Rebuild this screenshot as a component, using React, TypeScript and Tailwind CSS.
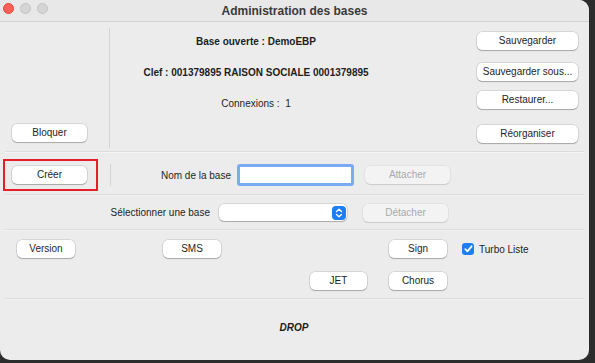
function Btn({
  children,
  className = "",
  disabled = false,
}: {
  children: React.ReactNode;
  className?: string;
  disabled?: boolean;
}) {
  return (
    <button
      className={
        "h-[18px] rounded-[5px] text-[10px] leading-none flex items-center justify-center " +
        (disabled
          ? "bg-[#f3f3f3] text-[#a9a9a9] shadow-[0_0_0_0.5px_rgba(0,0,0,0.08),0_1px_1px_rgba(0,0,0,0.1)] "
          : "bg-white text-[#1e1e1e] shadow-[0_0_0_0.5px_rgba(0,0,0,0.18),0_1px_1px_rgba(0,0,0,0.22)] ") +
        className
      }
    >
      {children}
    </button>
  );
}

function Sep() {
  return <div className="mx-[5px] h-[2px] bg-[#dcdcdc] border-b border-[#f4f4f4]" />;
}

export default function App() {
  return (
    <div
      className="w-[595px] h-[363px] bg-[#2c2c2c] overflow-hidden"
      style={{ fontFamily: '"Liberation Sans", Arial, sans-serif' }}
    >
      <div className="w-[589px] h-[360px] bg-[#ececec] rounded-tr-[10px] rounded-b-[10px] flex flex-col text-[#1e1e1e]">
        {/* Title bar */}
        <div className="h-[22px] relative flex items-center justify-center bg-[#e8e8e8] border-b border-[#d2d2d2] rounded-tr-[10px]">
          <div className="absolute left-[3px] top-[3px] flex gap-[6px]">
            <span className="w-[11px] h-[11px] rounded-full bg-[#fe5f57] border border-[#e2463f]" />
            <span className="w-[11px] h-[11px] rounded-full bg-[#d5d5d5] border border-[#c2c2c2]" />
            <span className="w-[11px] h-[11px] rounded-full bg-[#d5d5d5] border border-[#c2c2c2]" />
          </div>
          <span className="text-[12px] font-bold text-[#3a3a3a]">Administration des bases</span>
        </div>

        {/* Base info */}
        <div className="h-[129px] flex pt-[6px] pb-[3px]">
          <div className="w-[110px] border-r border-[#d4d4d4] flex flex-col justify-end pl-[12px] pb-[6px]">
            <Btn className="w-[75px]">Bloquer</Btn>
          </div>
          <div className="w-[292px] flex flex-col items-center text-[10px]">
            <div className="h-[14px] mt-[6px] font-bold">Base ouverte : DemoEBP</div>
            <div className="h-[14px] mt-[17px] font-bold">Clef : 001379895 RAISON SOCIALE 0001379895</div>
            <div className="h-[14px] mt-[17px]">Connexions :&nbsp; 1</div>
          </div>
          <div className="ml-auto w-[112px] flex flex-col pt-[4px]">
            <Btn className="w-[101px]">Sauvegarder</Btn>
            <Btn className="w-[101px] mt-[13px]">Sauvegarder sous...</Btn>
            <Btn className="w-[101px] mt-[10px]">Restaurer...</Btn>
            <Btn className="w-[101px] mt-[16px]">Réorganiser</Btn>
          </div>
        </div>
        <Sep />

        {/* Nom de la base */}
        <div className="h-[41px] flex items-center pt-[3px]">
          <div className="w-[95px] ml-[3px] h-[32px] border-2 border-[#e3202a] flex items-center pl-[7px]">
            <Btn className="w-[75px]">Créer</Btn>
          </div>
          <div className="w-[1px] h-[22px] bg-[#d4d4d4] ml-[12px]" />
          <span className="text-[10px] w-[120px] text-right">Nom de la base</span>
          <div className="ml-[6px] w-[117px] h-[22px] rounded-[3px] border-[3px] border-[#7aaaf2] bg-white" />
          <Btn disabled className="ml-[11px] w-[85px]">Attacher</Btn>
        </div>
        <Sep />

        {/* Sélectionner */}
        <div className="h-[33px] flex items-center">
          <span className="text-[10px] w-[210px] text-right">Sélectionner une base</span>
          <div className="ml-[9px] w-[128px] h-[17px] rounded-[5px] bg-white shadow-[0_0_0_0.5px_rgba(0,0,0,0.18),0_1px_1px_rgba(0,0,0,0.2)] flex justify-end items-center pr-[1px]">
            <div className="w-[14px] h-[14px] rounded-[4px] bg-[#1c7ef3] flex items-center justify-center">
              <svg width="8" height="10" viewBox="0 0 8 10" fill="none" stroke="white" strokeWidth="1.4" strokeLinecap="round" strokeLinejoin="round">
                <path d="M1.5 3.5 L4 1.2 L6.5 3.5" />
                <path d="M1.5 6.5 L4 8.8 L6.5 6.5" />
              </svg>
            </div>
          </div>
          <Btn disabled className="ml-[16px] w-[85px]">Détacher</Btn>
        </div>
        <Sep />

        {/* Tools */}
        <div className="h-[67px] flex flex-col pt-[9px]">
          <div className="flex items-center">
            <Btn className="ml-[17px] w-[58px]">Version</Btn>
            <Btn className="ml-[88px] w-[58px]">SMS</Btn>
            <Btn className="ml-[168px] w-[58px]">Sign</Btn>
            <div className="ml-[15px] w-[12px] h-[12px] rounded-[3px] bg-[#1c7ef3] flex items-center justify-center">
              <svg width="9" height="8" viewBox="0 0 9 8" fill="none" stroke="white" strokeWidth="1.8" strokeLinecap="round" strokeLinejoin="round">
                <path d="M1.3 4.2 L3.4 6.3 L7.6 1.3" />
              </svg>
            </div>
            <span className="ml-[5px] text-[10px]">Turbo Liste</span>
          </div>
          <div className="flex items-center mt-[14px]">
            <Btn className="ml-[310px] w-[57px]">JET</Btn>
            <Btn className="ml-[22px] w-[58px]">Chorus</Btn>
          </div>
        </div>
        <Sep />

        {/* Drop zone */}
        <div className="flex-1 flex justify-center pt-[20px] pr-[1px]">
          <span className="text-[10px] font-bold italic">DROP</span>
        </div>
      </div>
    </div>
  );
}
